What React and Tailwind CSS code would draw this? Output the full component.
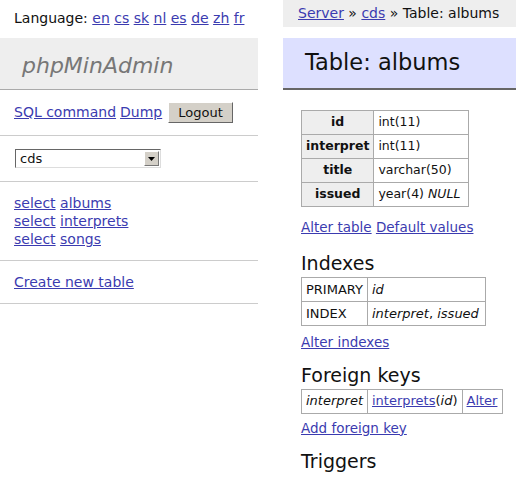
import React from 'react';

const link = 'text-[#3b3bb0] underline';

function Th({ children }) {
  return <th className="border border-[#aaa] bg-[#eee] px-[4px] h-[24px] font-bold text-center whitespace-nowrap">{children}</th>;
}

function Td({ children, className = '' }) {
  return <td className={`border border-[#aaa] px-[4px] h-[24px] text-left whitespace-nowrap ${className}`}>{children}</td>;
}

export default function App() {
  const langs = ['en', 'cs', 'sk', 'nl', 'es', 'de', 'zh', 'fr'];
  return (
    <div
      className="w-[516px] h-[479px] bg-white flex overflow-hidden text-[14px] text-[#111]"
      style={{ fontFamily: '"DejaVu Sans", Verdana, sans-serif' }}
    >
      <div className="w-[258px] shrink-0">
        <div className="h-[38px] pl-[14px] pt-[8px] whitespace-nowrap">
          Language:{' '}
          {langs.map((l) => (
            <React.Fragment key={l}>
              <a className={link}>{l}</a>{' '}
            </React.Fragment>
          ))}
        </div>
        <div className="h-[52px] bg-[#eee] border-b border-[#aaa] pl-[22px] pt-[11px]">
          <span className="text-[22px] italic text-[#777]">phpMinAdmin</span>
        </div>
        <div className="h-[46px] border-b border-[#ccc] pl-[14px] flex items-center gap-[4px] whitespace-nowrap">
          <a className={link}>SQL command</a>
          <a className={link}>Dump</a>
          <button className="ml-[2px] h-[21px] px-[9px] bg-[#d4d0c8] border border-t-[#fff] border-l-[#fff] border-r-[#666] border-b-[#666] text-[13px]">
            Logout
          </button>
        </div>
        <div className="h-[46px] border-b border-[#ccc] pl-[15px] flex items-center">
          <div className="w-[146px] h-[19px] border border-t-[#666] border-l-[#666] border-b-[#ddd] border-r-[#ddd] flex items-center justify-between pl-[4px] pr-[1px] text-[13px]">
            <span>cds</span>
            <span className="w-[15px] h-[15px] bg-[#d4d0c8] border border-t-[#fff] border-l-[#fff] border-r-[#777] border-b-[#777] flex items-center justify-center">
              <svg width="7" height="4" viewBox="0 0 7 4"><path d="M0 0h7L3.5 4z" fill="#000" /></svg>
            </span>
          </div>
        </div>
        <div className="border-b border-[#ccc] pl-[14px] pt-[12px] pb-[12px] leading-[18px]">
          {['albums', 'interprets', 'songs'].map((t) => (
            <div key={t}>
              <a className={link}>select</a> <a className={link}>{t}</a>
            </div>
          ))}
        </div>
        <div className="h-[43px] border-b border-[#ccc] pl-[14px] flex items-center">
          <a className={link}>Create new table</a>
        </div>
      </div>

      <div className="w-[25px] shrink-0" />

      <div className="flex-1 min-w-0">
        <div className="h-[27px] bg-[#eee] pl-[15px] pt-[3px] whitespace-nowrap">
          <a className={link}>Server</a> » <a className={link}>cds</a> » Table: albums
        </div>
        <div className="mt-[11px] h-[52px] bg-[#dde0ff] border-b-2 border-[#666] pl-[22px] flex items-center">
          <h2 className="text-[22.5px] text-[#111]">Table: albums</h2>
        </div>
        <div className="pl-[18px] pt-[20px] text-[13.5px]">
          <table className="border-collapse text-[12.5px]">
            <tbody>
              <tr><Th>id</Th><Td className="w-[95px]">int(11)</Td></tr>
              <tr><Th>interpret</Th><Td>int(11)</Td></tr>
              <tr><Th>title</Th><Td>varchar(50)</Td></tr>
              <tr><Th>issued</Th><Td>year(4) <i>NULL</i></Td></tr>
            </tbody>
          </table>
          <div className="mt-[10px]">
            <a className={link}>Alter table</a> <a className={link}>Default values</a>
          </div>
          <h3 className="text-[19px] mt-[14px] mb-[2px] leading-[24px]">Indexes</h3>
          <table className="border-collapse text-[13px]">
            <tbody>
              <tr><Td>PRIMARY</Td><Td><i>id</i></Td></tr>
              <tr><Td>INDEX</Td><Td className="pr-[6px]"><i>interpret</i>, <i>issued</i></Td></tr>
            </tbody>
          </table>
          <div className="mt-[6px]">
            <a className={link}>Alter indexes</a>
          </div>
          <h3 className="text-[19px] mt-[10px] mb-[2px] leading-[24px]">Foreign keys</h3>
          <table className="border-collapse text-[13px]">
            <tbody>
              <tr>
                <Td><i>interpret</i></Td>
                <Td><a className={link}>interprets</a>(<i>id</i>)</Td>
                <Td className="pr-[5px]"><a className={link}>Alter</a></Td>
              </tr>
            </tbody>
          </table>
          <div className="mt-[4px]">
            <a className={link}>Add foreign key</a>
          </div>
          <h3 className="text-[19px] mt-[11px] leading-[24px]">Triggers</h3>
        </div>
      </div>
    </div>
  );
}
